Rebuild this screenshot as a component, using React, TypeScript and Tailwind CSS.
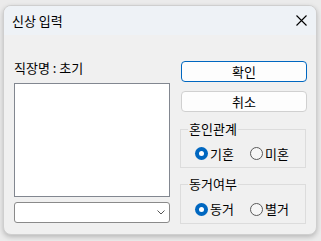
import type { ReactNode } from 'react';

const font = { fontFamily: '"Noto Sans CJK KR", "Noto Sans", sans-serif' };

function Radio({ label, checked }: { label: string; checked?: boolean }) {
  return (
    <div className="w-[59px] flex items-center gap-[2px]">
      {checked ? (
        <span className="w-[13px] h-[13px] rounded-full bg-[#0067c0] flex items-center justify-center">
          <span className="w-[5px] h-[5px] rounded-full bg-white" />
        </span>
      ) : (
        <span className="w-[13px] h-[13px] rounded-full border border-[#5a5a5a] bg-[#f6f6f6]" />
      )}
      <span className="text-[13px] leading-[16px] text-black">{label}</span>
    </div>
  );
}

function GroupBox({ title, height, children }: { title: string; height: string; children: ReactNode }) {
  return (
    <div className={`relative border border-[#dcdcdc] ${height} pt-[10px] pl-[14px] flex`}>
      <span className="absolute -top-[9px] left-[7px] bg-[#f0f0f0] px-[1px] text-[13px] leading-[16px] text-black">
        {title}
      </span>
      {children}
    </div>
  );
}

export default function App() {
  return (
    <div className="w-[321px] h-[241px] bg-[#ebebeb] pt-[5px] pl-[3px]" style={font}>
      <div className="w-[314px] h-[230px] rounded-[8px] border border-[#cfcfcf] bg-[#f0f0f0] overflow-hidden shadow-[0_2px_5px_rgba(0,0,0,0.22)] flex flex-col">
        <div className="h-[29px] shrink-0 bg-[#eef2f6] flex items-center justify-between pl-[8px] pr-[9px]">
          <span className="text-[13px] leading-[16px] text-black">신상 입력</span>
          <svg width="11" height="11" viewBox="0 0 11 11" className="text-black">
            <path d="M0.5 0.5 L10.5 10.5 M10.5 0.5 L0.5 10.5" stroke="currentColor" strokeWidth="1.1" />
          </svg>
        </div>
        <div className="flex pl-[10px] gap-[11px]">
          <div className="flex flex-col w-[156px] pt-[25px]">
            <div className="text-[13px] leading-[16px] text-black">직장명 : 초기</div>
            <div className="mt-[7px] h-[114px] border border-[#828790] bg-white" />
            <div className="mt-[5px] h-[21px] border border-[#8a8a8a] rounded-[3px] bg-white flex items-center justify-end pr-[4px]">
              <svg width="8" height="5" viewBox="0 0 8 5">
                <path d="M0.5 0.5 L4 4 L7.5 0.5" fill="none" stroke="#555" strokeWidth="1" />
              </svg>
            </div>
          </div>
          <div className="flex flex-col w-[126px] pt-[26px]">
            <button className="h-[21px] rounded-[4px] border border-[#0067c0] bg-[#fdfdfd] text-[13px] leading-none text-black">
              확인
            </button>
            <button className="mt-[9px] h-[21px] rounded-[4px] border border-[#d0d0d0] bg-[#fdfdfd] text-[13px] leading-none text-black">
              취소
            </button>
            <div className="mt-[17px] -ml-[1px] mr-[1px]">
              <GroupBox title="혼인관계" height="h-[39px]">
                <Radio label="기혼" checked />
                <Radio label="미혼" />
              </GroupBox>
            </div>
            <div className="mt-[16px] -ml-[1px] mr-[1px]">
              <GroupBox title="동거여부" height="h-[40px]">
                <Radio label="동거" checked />
                <Radio label="별거" />
              </GroupBox>
            </div>
          </div>
        </div>
      </div>
    </div>
  );
}
